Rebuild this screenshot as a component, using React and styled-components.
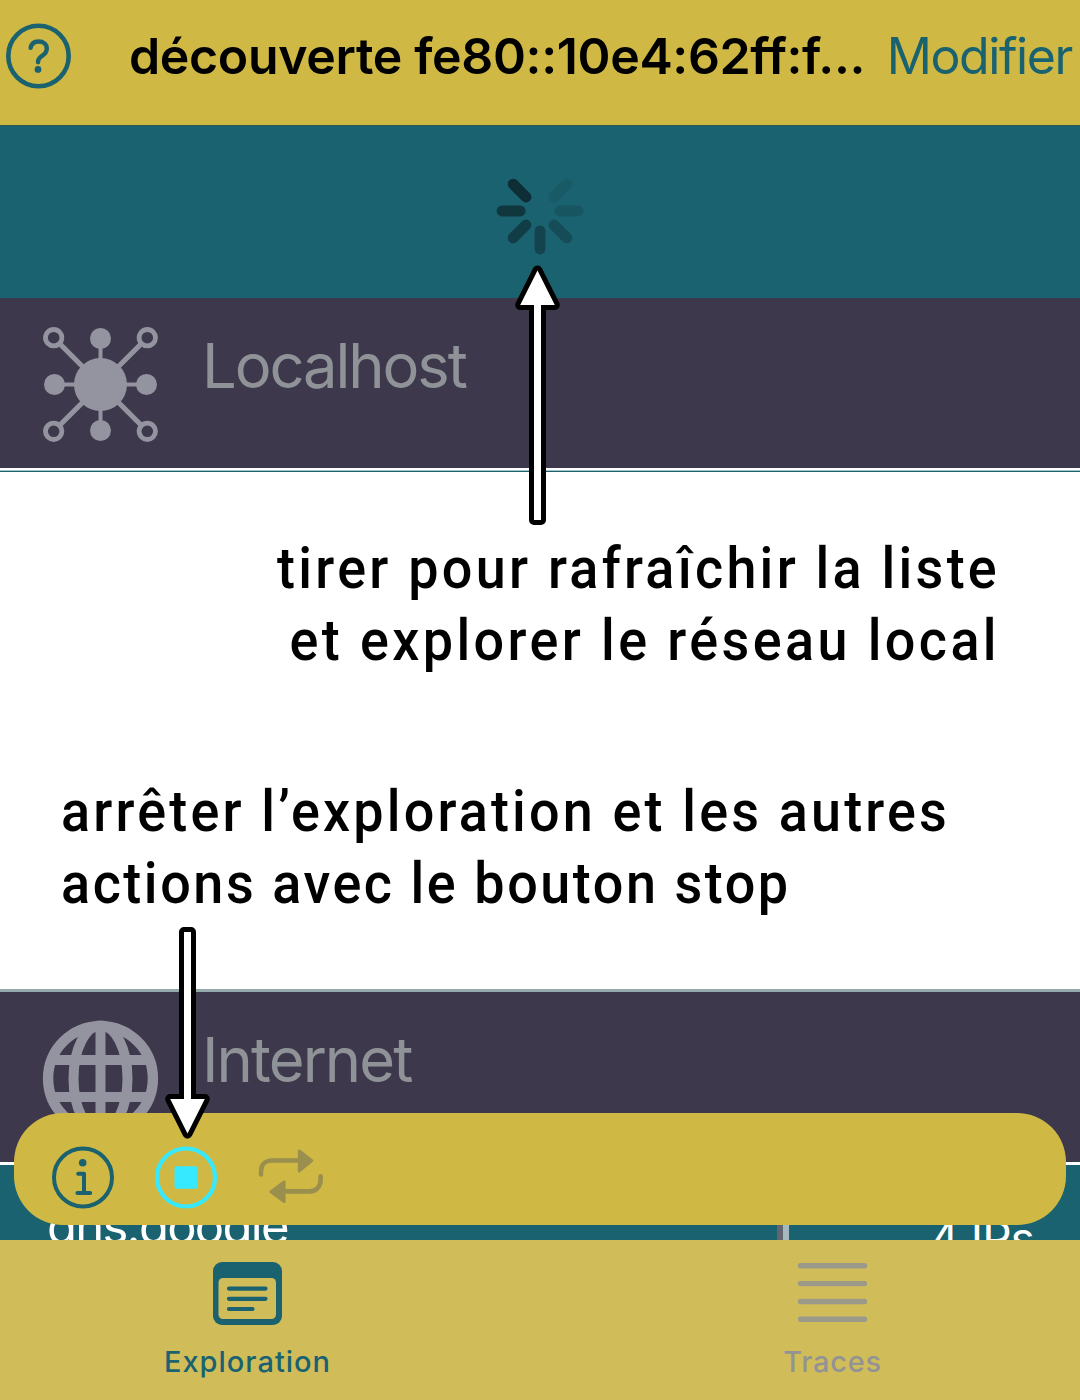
import React from "react";
import styled, { createGlobalStyle } from "styled-components";

const c = {
  gold: "#cfb944",
  tab: "#d0bd5a",
  teal: "#1a626f",
  plum: "#3d384b",
  icon: "#9494a1",
  label: "#8f9398",
  cyan: "#36e9ff",
  olive: "#9b8f4e",
};

const Global = createGlobalStyle`
  * { box-sizing: border-box; }
  body { margin: 0; background: #fff; }
`;

const Screen = styled.div`
  position: relative;
  display: flex;
  flex-direction: column;
  width: 1080px;
  height: 1400px;
  overflow: hidden;
  background: #fff;
  font-family: Inter, "Liberation Sans", sans-serif;
`;

const NavBar = styled.header`
  display: flex;
  align-items: center;
  height: 125px;
  padding: 0 8px 13px 6px;
  background: ${c.gold};
  flex: none;
`;

const NavTitle = styled.h1`
  margin: 0 0 0 58px;
  width: 736px;
  font-size: 50px;
  font-weight: 600;
  line-height: 64px;
  letter-spacing: ${(p) => p.$track}px;
  white-space: nowrap;
  color: #000;
`;

const NavAction = styled.button`
  margin: 0 0 0 auto;
  padding: 0;
  border: 0;
  background: none;
  font: 400 50px/64px Inter, sans-serif;
  letter-spacing: ${(p) => p.$track}px;
  color: ${c.teal};
`;

const Scroll = styled.main`
  display: flex;
  flex-direction: column;
  height: 1115px;
  flex: none;
  overflow: hidden;
`;

const Refresh = styled.div`
  display: flex;
  justify-content: center;
  height: 173px;
  padding-top: 41px;
  background: ${c.teal};
  border-top: 1px solid #2a5a50;
  flex: none;
`;

const SectionRow = styled.section`
  display: flex;
  gap: 43px;
  height: 170px;
  padding: 28px 42px;
  background: ${c.plum};
  flex: none;
`;

const SectionName = styled.h2`
  margin: 0;
  padding-top: 3px;
  font-size: 61.5px;
  font-weight: 400;
  line-height: 74px;
  letter-spacing: ${(p) => p.$track}px;
  color: ${c.label};
`;

const Rule = styled.div`
  height: ${(p) => p.$size}px;
  background: ${(p) => p.$color};
  flex: none;
`;

const Notes = styled.div`
  display: flex;
  flex-direction: column;
  justify-content: space-between;
  height: 517px;
  padding: 60px 80px 70px 61px;
  flex: none;
`;

const Note = styled.p`
  display: flex;
  flex-direction: column;
  align-items: ${(p) => (p.$end ? "flex-end" : "flex-start")};
  margin: 0;
  font-family: Roboto, "Liberation Sans", sans-serif;
  font-size: 58px;
  font-weight: 500;
  line-height: 72px;
  color: #000;
  transform: scaleX(0.93);
  transform-origin: ${(p) => (p.$end ? "right" : "left")};
`;

const NoteLine = styled.span`
  white-space: nowrap;
  letter-spacing: ${(p) => p.$track}px;
`;

const HostRow = styled.div`
  display: flex;
  height: 120px;
  background: ${c.teal};
  color: #fff;
  flex: none;
`;

const HostName = styled.span`
  width: 777px;
  padding: 32px 0 0 47px;
  font-size: 49px;
  line-height: 60px;
  letter-spacing: ${(p) => p.$track}px;
`;

const HostDivider = styled.i`
  width: 12px;
  border-left: 6px solid #61656f;
  border-right: 6px solid #a5b8bd;
`;

const HostCount = styled.span`
  margin-left: auto;
  padding: 46px 46px 0 0;
  font-size: 46px;
  line-height: 54px;
  letter-spacing: -0.9px;
`;

const ActionBar = styled.div`
  position: absolute;
  left: 14px;
  top: 1113px;
  display: flex;
  align-items: center;
  gap: 40px;
  width: 1052px;
  height: 112px;
  padding: 16px 37.5px 0 37px;
  border-radius: 49px;
  background: ${c.gold};
`;

const TabBar = styled.nav`
  display: flex;
  height: 160px;
  padding: 0 0 0 2px;
  background: ${c.tab};
  flex: none;
`;

const Tab = styled.div`
  display: flex;
  flex: none;
  flex-direction: column;
  align-items: center;
  width: ${(p) => p.$width}px;
  padding-top: 20px;
  font-size: 29px;
  font-weight: 500;
  line-height: 36px;
  color: ${(p) => p.$color};
  letter-spacing: ${(p) => p.$track}px;
  gap: 18px;
`;

const Pointer = styled.svg`
  position: absolute;
  left: ${(p) => p.$x}px;
  top: ${(p) => p.$y}px;
  overflow: visible;
`;

const HelpIcon = () => (
  <svg width="65" height="66" viewBox="0 0 65 66" fill="none" stroke={c.teal}>
    <circle cx="32.5" cy="33" r="30.2" strokeWidth="4.6" />
    <path d="M24.6 24.8C25.4 20.6 28.6 18.5 32.6 18.5C37.4 18.5 40.8 21.3 40.8 25.6C40.8 29 39 31 36 32.9C33 34.8 32 36 32 39.2" strokeWidth="4.4" strokeLinecap="round" />
    <circle cx="32" cy="46.4" r="3.4" fill={c.teal} stroke="none" />
  </svg>
);

const spokes = [
  [-135, "#0d2e34"],
  [180, "#10363e"],
  [135, "#113d46"],
  [90, "#13444e"],
  [45, "#154c57"],
  [0, "#175661"],
  [-45, "#185b67"],
];

const Spinner = () => (
  <svg width="88" height="88" viewBox="-44 -44 88 88">
    {spokes.map(([angle, color]) => (
      <line key={angle} x1="19.8" x2="38" y1="0" y2="0" stroke={color} strokeWidth="10.8" strokeLinecap="round" transform={`rotate(${angle})`} />
    ))}
  </svg>
);

const NetworkIcon = () => (
  <svg width="117" height="117" viewBox="-58.5 -58.5 117 117" fill={c.icon} stroke={c.icon}>
    <path d="M0-46V46M-46 0H46" strokeWidth="4" />
    <path d="M-40-40L40 40M40-40L-40 40" strokeWidth="5.2" />
    <circle r="26.5" stroke="none" />
    {[[0, -46], [0, 46], [-46, 0], [46, 0]].map(([x, y]) => (
      <circle key={`${x},${y}`} cx={x} cy={y} r="10.5" stroke="none" />
    ))}
    {[[-46.8, -46.8], [46.8, -46.8], [-46.8, 46.8], [46.8, 46.8]].map(([x, y]) => (
      <circle key={`${x},${y}`} cx={x} cy={y} r="8.2" fill={c.plum} strokeWidth="4.8" />
    ))}
  </svg>
);

const GlobeIcon = () => (
  <svg width="117" height="117" viewBox="-58.5 -58.5 117 117" fill="none" stroke={c.icon} strokeWidth="10">
    <circle r="52.4" strokeWidth="10.4" />
    <ellipse rx="27" ry="53" />
    <path d="M0-52V52M-46-18.5H46M-46 18.5H46" />
  </svg>
);

const InfoIcon = () => (
  <svg width="63" height="63" viewBox="-32 -31.5 63 63" fill="none" stroke={c.teal} strokeWidth="4" strokeLinecap="round" strokeLinejoin="round">
    <circle r="29" />
    <circle cx="-0.3" cy="-14.8" r="3.8" fill={c.teal} stroke="none" />
    <path d="M-4.8-3.8H1V15.4M-5.6 15.4H7.2" />
  </svg>
);

const StopIcon = () => (
  <svg width="63" height="63" viewBox="-32 -31.5 63 63">
    <circle r="29" fill="none" stroke={c.cyan} strokeWidth="4.2" />
    <rect x="-11.5" y="-11.3" width="23" height="22.6" rx="2" fill={c.cyan} />
  </svg>
);

const RepeatIcon = () => (
  <svg width="66" height="56" viewBox="-0.8 1.3 66 56" fill="none" stroke={c.olive} strokeWidth="4.6" strokeLinecap="round" strokeLinejoin="round">
    <path d="M3.2 26.8V23.5C3.2 17 7.6 12.8 14 12.8H40M62.8 28.5V32C62.8 39 58.4 43.7 52 43.7H26" />
    <path d="M41.5 3.3V23.2L54 13ZM26.3 34.3V53.8L13.2 44Z" fill={c.olive} strokeWidth="3" />
  </svg>
);

const WindowIcon = () => (
  <svg width="70" height="66" viewBox="0.5 0 70 66">
    <rect x="0.5" y="2" width="69" height="63" rx="9" fill={c.teal} />
    <rect x="6" y="18" width="57.5" height="41" rx="4.5" fill={c.tab} />
    <path d="M16.5 28.6H53M16.5 38.8H53M16.5 49H40" stroke={c.teal} strokeWidth="4.2" strokeLinecap="round" />
  </svg>
);

const LinesIcon = () => (
  <svg width="70" height="66" viewBox="0.5 0 70 66">
    <path d="M3 5.8H67M3 23.6H67M3 41.5H67M3 59.3H67" stroke="#9b9989" strokeWidth="5.4" strokeLinecap="round" />
  </svg>
);

export default function App() {
  return (
    <Screen>
      <Global />
      <NavBar>
        <HelpIcon />
        <NavTitle $track={-0.35}>découverte fe80::10e4:62ff:f...</NavTitle>
        <NavAction $track={-1.4}>Modifier</NavAction>
      </NavBar>
      <Scroll>
        <Refresh>
          <Spinner />
        </Refresh>
        <SectionRow>
          <NetworkIcon />
          <SectionName $track={-2.1}>Localhost</SectionName>
        </SectionRow>
        <Rule $size={2} $color="#fff" />
        <Rule $size={1} $color="#a9c3c6" />
        <Rule $size={1} $color={c.teal} />
        <Notes>
          <Note $end>
            <NoteLine $track={3.5}>tirer pour rafraîchir la liste</NoteLine>
            <NoteLine $track={3.65}>et explorer le réseau local</NoteLine>
          </Note>
          <Note>
            <NoteLine $track={3.4}>arrêter l’exploration et les autres</NoteLine>
            <NoteLine $track={2.75}>actions avec le bouton stop</NoteLine>
          </Note>
        </Notes>
        <Rule $size={3} $color="#93a9ac" />
        <SectionRow>
          <GlobeIcon />
          <SectionName $track={-1.9}>Internet</SectionName>
        </SectionRow>
        <Rule $size={3} $color="#fff" />
        <HostRow>
          <HostName $track={-1.75}>dns.google</HostName>
          <HostDivider />
          <HostCount>4 IPs</HostCount>
        </HostRow>
      </Scroll>
      <TabBar>
        <Tab $width={491} $color={c.teal} $track={1}>
          <WindowIcon />
          Exploration
        </Tab>
        <Tab $width={679} $color="#939393" $track={0.7}>
          <LinesIcon />
          Traces
        </Tab>
      </TabBar>
      <ActionBar>
        <InfoIcon />
        <StopIcon />
        <RepeatIcon />
      </ActionBar>
      <Pointer $x={515} $y={265} width="45" height="260" viewBox="0 0 45 260">
        <path d="M22.5 5.5L5.2 40H19V255H26V40H39.8Z" fill="#fff" stroke="#000" strokeWidth="10" strokeLinejoin="round" paintOrder="stroke" />
      </Pointer>
      <Pointer $x={165} $y={927} width="45" height="212" viewBox="0 0 45 212">
        <path d="M22.5 206.5L5.2 172H19V5H26V172H39.8Z" fill="#fff" stroke="#000" strokeWidth="10" strokeLinejoin="round" paintOrder="stroke" />
      </Pointer>
    </Screen>
  );
}
